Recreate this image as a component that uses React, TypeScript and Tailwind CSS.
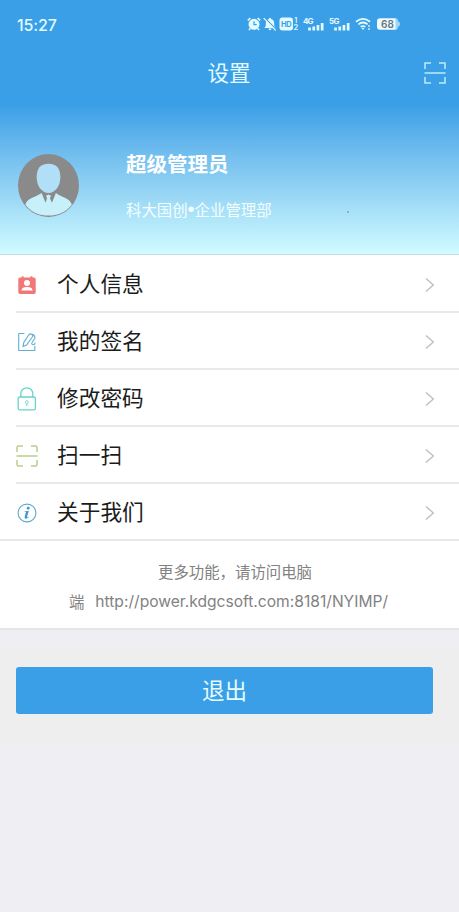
import React from 'react';

interface MenuItem {
  label: string;
  icon: React.ReactNode;
}

function ScanIcon({ className, color, radius = 0 }: { className?: string; color: string; radius?: number }) {
  const r = radius;
  const far = 21 - r;
  return (
    <svg viewBox="0 0 22 22" className={className} fill="none" stroke={color} strokeWidth="1.5">
      <path d={`M1 7V${1 + r}Q1 1 ${1 + r} 1H7M15 1H${far}Q21 1 21 ${1 + r}V7M21 15V${far}Q21 21 ${far} 21H15M7 21H${1 + r}Q1 21 1 ${far}V15`} />
      <path d="M0.5 11H21.5" />
    </svg>
  );
}

function ContactIcon() {
  return (
    <svg viewBox="0 0 20 20" className="size-5">
      <path d="M3 2.6H4.6V1.2H6.6V2.6H13.4V1.2H15.4V2.6H17Q18.7 2.6 18.7 4.3V17.3Q18.7 19 17 19H3Q1.3 19 1.3 17.3V4.3Q1.3 2.6 3 2.6Z" fill="#f27878" />
      <circle cx="10" cy="8" r="3" fill="white" />
      <path d="M4.5 15.5C4.5 12.8 7 11.9 10 11.9S15.5 12.8 15.5 15.5Z" fill="white" />
    </svg>
  );
}

function SignIcon() {
  return (
    <svg viewBox="0 0 20 20" className="size-5" fill="none" stroke="#5fb0d3" strokeWidth="1.1" strokeLinejoin="round" strokeLinecap="round">
      <path d="M7 1.5H1.7V18.5H17.8V14.5" />
      <path d="M6 14.6L6.8 10.4L11.8 2.8Q13.2 1.2 14.8 2.4T15.3 5L9.7 12.9Z" />
      <path d="M14.8 2.4Q17.8 2.6 18 6.2L15.2 10.2Q14 12.4 16 12.7T18 10.7" />
    </svg>
  );
}

function LockIcon() {
  return (
    <svg viewBox="0 0 20 24" className="h-6 w-5" fill="none" stroke="#65d5c8" strokeWidth="1.3">
      <rect x="1.2" y="10" width="17.2" height="12.8" rx="1.6" />
      <path d="M3.8 10V6.6A6 5.8 0 0 1 15.8 6.6V10" />
      <path d="M9.8 16.8V19" strokeWidth="1" />
      <ellipse cx="9.8" cy="15.2" rx="1.3" ry="1.6" strokeWidth="0.8" />
    </svg>
  );
}

function InfoIcon() {
  return (
    <svg viewBox="0 0 20 20" className="size-5">
      <circle cx="10" cy="10" r="8.9" fill="none" stroke="#62a9cc" strokeWidth="1.1" />
      <circle cx="11.2" cy="5.2" r="1.4" fill="#3b96d5" />
      <path d="M7.5 8.4L11.8 7.7L9.9 14.2Q9.8 15 11.7 13.6L12 14Q10.2 16 8.6 15.8Q7.2 15.5 7.7 13.8L9 9.1L7.5 9Z" fill="#3b96d5" />
    </svg>
  );
}

const menuItems: MenuItem[] = [
  { label: '个人信息', icon: <ContactIcon /> },
  { label: '我的签名', icon: <SignIcon /> },
  { label: '修改密码', icon: <LockIcon /> },
  { label: '扫一扫', icon: <ScanIcon className="size-[22px]" color="#b5cf8d" radius={1.5} /> },
  { label: '关于我们', icon: <InfoIcon /> },
];

function Signal({ label }: { label: string }) {
  return (
    <svg viewBox="0 0 22 16" className="h-4 w-[22px]" fill="#e2fbff">
      <text x="0" y="7.5" fontSize="8" fontWeight="700" textLength="10.5" className="font-['Inter',sans-serif]">{label}</text>
      <rect x="5.2" y="11.5" width="2.7" height="3" />
      <rect x="9.4" y="10.5" width="2.7" height="4" />
      <rect x="13.6" y="9" width="2.7" height="5.5" />
      <rect x="17.8" y="7" width="2.7" height="7.5" />
    </svg>
  );
}

function StatusBar() {
  return (
    <div className="flex h-12 items-center justify-between pl-[17px] pr-[58.5px] text-[#e2fbff]">
      <span className="pt-0.5 font-['Inter','Noto_Sans_CJK_SC',sans-serif] text-[16px] font-medium tracking-[-0.1px]">15:27</span>
      <div className="flex items-center">
        <svg viewBox="0 0 14 14" className="size-3.5">
          <circle cx="7" cy="7.3" r="5.5" fill="#e2fbff" />
          <path d="M0.8 3.4L3.4 1M10.6 1L13.2 3.4M3 11.5L2 13M11 11.5L12 13" stroke="#e2fbff" strokeWidth="1.6" />
          <path d="M7 4.3V7.7H9.7" fill="none" stroke="#3a9fe6" strokeWidth="1.2" />
        </svg>
        <svg viewBox="0 0 14 14" className="ml-0.5 size-3.5">
          <path d="M7 0.8Q8 0.8 8 2Q11.2 2.8 11.2 6.2V9L12.6 11H1.4L2.8 9V6.2Q2.8 2.8 6 2Q6 0.8 7 0.8ZM5.5 11.6H8.5Q8.5 13.2 7 13.2T5.5 11.6Z" fill="#e2fbff" />
          <path d="M1.5 0.5L13.5 13" stroke="#3a9fe6" strokeWidth="1.2" />
          <path d="M0.7 1.2L12.7 13.5" stroke="#e2fbff" strokeWidth="1.2" />
        </svg>
        <svg viewBox="0 0 20 16" className="ml-0.5 h-4 w-5" fill="#e2fbff">
          <rect x="0.5" y="1.5" width="13.5" height="13" rx="3" />
          <text x="2" y="10.8" fontSize="7.5" fontWeight="700" textLength="10.6" fill="#3a9fe6" className="font-['Inter',sans-serif]">HD</text>
          <text x="15.3" y="6.8" fontSize="7" fontWeight="600" className="font-['Inter',sans-serif]">1</text>
          <text x="14.4" y="14.4" fontSize="7.5" fontWeight="600" className="font-['Inter',sans-serif]">2</text>
        </svg>
        <div className="ml-1"><Signal label="4G" /></div>
        <div className="ml-[3.5px]"><Signal label="5G" /></div>
        <svg viewBox="0 0 17 14" className="ml-1 h-3.5 w-[17px]" fill="none" stroke="#e2fbff" strokeWidth="1.8">
          <path d="M1 4.7Q8 -0.9 15 4.7M3.4 7.4Q8 3.7 12.6 7.4M5.7 9.9Q8 8.2 10.3 9.9" />
          <path d="M6.5 11H9.5L8 12.9Z" fill="#e2fbff" stroke="none" />
          <path d="M14 8V10M14 11V13" strokeWidth="1.3" />
        </svg>
        <svg viewBox="0 0 25 14" className="ml-1 h-3.5 w-[25px]">
          <path d="M19 1.2H20Q22 1.2 22 4.5H22.5Q24 4.5 24 7T22.5 9.5H22Q22 12.8 20 12.8H19Z" fill="#9dd5fb" />
          <path d="M4 1.2H19.5V12.8H4Q1 12.8 1 9.8V4.2Q1 1.2 4 1.2Z" fill="#eefcff" />
          <text x="5" y="10.8" fontSize="10" fontWeight="600" textLength="13" fill="#68747c" className="font-['Inter',sans-serif]">68</text>
        </svg>
      </div>
    </div>
  );
}

function Avatar() {
  return (
    <svg viewBox="0 0 64 66" className="mt-0.5 h-[65px] w-[63px]">
      <ellipse cx="32" cy="33" rx="31" ry="32" fill="#8a8a8a" />
      <path d="M32 11C40.5 11 44 16 44 24.5C44 33.5 38.7 40.5 32 40.5S20 33.5 20 24.5C20 16 23.5 11 32 11Z" fill="#b1dff7" />
      <path d="M8.5 52.5C10 45.5 20 44.5 25 40.5L29 50.5L30.5 46L29.5 43.5L32 42.2L34.5 43.5L33.5 46L35.5 50.5L39.5 40.5C44 44.5 54 45.5 55.7 52.5C44.5 67.3 19.5 67.3 8.5 52.5Z" fill="#c7f0fb" />
    </svg>
  );
}

export default function App() {
  return (
    <div className="flex h-[912px] w-full flex-col overflow-hidden bg-[#eeeef3] font-['Noto_Sans_CJK_SC',sans-serif]">
      <header className="h-[105px] shrink-0 bg-[#3a9fe7]">
        <StatusBar />
        <div className="grid h-[49px] grid-cols-[1fr_auto_1fr] items-center pl-3 pr-[13px]">
          <h1 className="col-start-2 pb-px text-[21.5px] leading-none text-[#e4fbff]">设置</h1>
          <ScanIcon className="size-[22px] justify-self-end" color="#bdeefc" />
        </div>
      </header>

      <section className="relative flex h-[150px] shrink-0 items-start border-b border-[#c9dce4] bg-linear-to-b from-[#3a9fe7] via-[#8acdf2] to-[#d0fbff] pl-[17px] pt-[46px]">
        <Avatar />
        <div className="ml-[46px] whitespace-nowrap text-white">
          <div className="text-[20.5px] font-bold leading-6">超级管理员</div>
          <div className="mt-6 text-[15.4px] leading-5 text-[#f4ffff]">
            科大国创<span className="font-['Liberation_Sans',sans-serif] text-[20px] leading-none">•</span>企业管理部
          </div>
        </div>
        <span className="absolute left-[347px] top-[106px] size-0.5 rounded-full bg-[#76a9b7]" />
      </section>

      <div className="flex h-[286px] shrink-0 flex-col border-b-2 border-[#e9e9eb] bg-white pl-4 pt-px">
        {menuItems.map((item) => (
          <div key={item.label} className="flex h-[57px] shrink-0 items-center border-b-2 border-[#e9e9eb] pr-6 pt-0.5 last:h-[55px] last:border-b-0">
            <span className="flex w-[22px] justify-center">{item.icon}</span>
            <span className="ml-[19px] flex-1 pb-[3px] text-[21.7px] leading-none text-[#1b1b1b]">{item.label}</span>
            <svg viewBox="0 0 10 16" className="h-4 w-2.5" fill="none" stroke="#bfbfc3" strokeWidth="1.4">
              <path d="M1 1.5L8.3 8L1 14.5" />
            </svg>
          </div>
        ))}
      </div>

      <div className="flex h-[89px] shrink-0 flex-col items-center border-b-2 border-[#e5e5e8] bg-white pt-[15px] text-[15.4px] leading-[30px] text-[#828282]">
        <p className="pl-[11px]">更多功能，请访问电脑</p>
        <p className="flex whitespace-nowrap pr-0.5">
          <span>端</span>
          <span className="ml-[11px] pt-px font-['Inter','Noto_Sans_CJK_SC',sans-serif] text-[15.6px]">http://power.kdgcsoft.com:8181/NYIMP/</span>
        </p>
      </div>

      <div className="mt-[18px] h-[95px] shrink-0 bg-[#eeeeee] pl-4 pr-[26px] pt-[19px]">
        <button className="flex h-[47px] w-full items-center justify-center rounded-[3px] bg-[#3a9fe7] pb-[3px] text-[22.5px] leading-none text-[#e4fbff]">
          退出
        </button>
      </div>
    </div>
  );
}
